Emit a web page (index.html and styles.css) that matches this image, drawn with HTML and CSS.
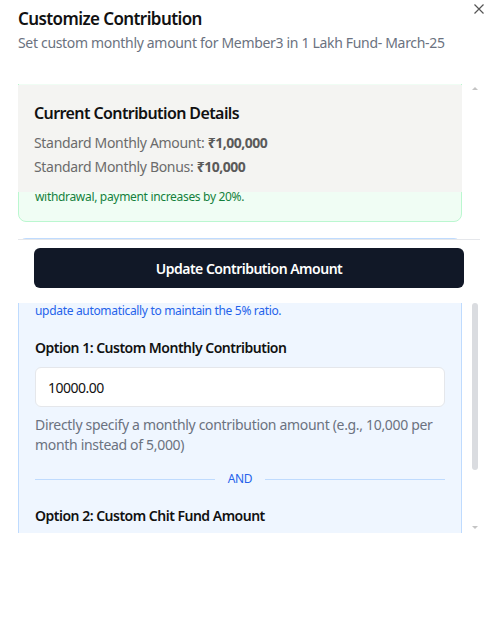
FILE: index.html
```html
<!DOCTYPE html>
<html lang="en">
<head>
<meta charset="utf-8">
<title>Customize Contribution</title>
<link rel="stylesheet" href="styles.css">
</head>
<body>
<div class="modal">
  <button class="close" aria-label="Close">
    <svg width="10" height="10" viewBox="0 0 10 10"><path d="M0.5 0.5L9.5 9.5M9.5 0.5L0.5 9.5" stroke="#555" stroke-width="1.2" fill="none"/></svg>
  </button>
  <header class="head">
    <h2 class="title">Customize Contribution</h2>
    <p class="subtitle">Set custom monthly amount for Member3 in 1 Lakh Fund- March-25</p>
  </header>

  <div class="scroll">
    <div class="scroll-content">
      <div class="note">
        <h4 class="note-title">Payment Rules</h4>
        <p class="note-text">Before withdrawal, member pays the standard amount.<br>Bonus is 10% of the standard monthly amount.<br>Custom amounts apply from this month onward.<br>Changes can be reverted at any time.<br>Standard payment applies before withdrawal. After<br>withdrawal, payment increases by 20%.</p>
      </div>

      <div class="options">
        <h4 class="options-title">Contribution Options</h4>
        <p class="options-text">Choose one option below. The other value will<br>update automatically to maintain the 5% ratio.</p>

        <div class="field">
          <label class="field-label">Option 1: Custom Monthly Contribution</label>
          <div class="input">10000.00</div>
          <p class="help">Directly specify a monthly contribution amount (e.g., 10,000 per month instead of 5,000)</p>
        </div>

        <div class="divider"><span class="rule"></span><span class="and">AND</span><span class="rule"></span></div>

        <div class="field">
          <label class="field-label">Option 2: Custom Chit Fund Amount</label>
        </div>
      </div>
    </div>

    <div class="details">
      <h3 class="details-title">Current Contribution Details</h3>
      <p class="details-line">Standard Monthly Amount: <b>₹1,00,000</b></p>
      <p class="details-line">Standard Monthly Bonus: <b>₹10,000</b></p>
    </div>

    <div class="scrollbar">
      <span class="arrow up"></span>
      <span class="thumb"></span>
      <span class="arrow down"></span>
    </div>

    <div class="footer">
      <button class="primary">Update Contribution Amount</button>
    </div>
  </div>
</div>
</body>
</html>
```

FILE: styles.css
```css
* { box-sizing: border-box; }
html, body { margin: 0; padding: 0; background: #fff; }
body {
  font-family: "Noto Sans", "Open Sans", sans-serif;
  color: #111827;
  width: 500px;
  height: 632px;
  overflow: hidden;
  letter-spacing: -0.02em;
}
.modal {
  position: relative;
  padding: 0 18px;
}
.close {
  position: absolute;
  top: 4px;
  right: 16px;
  border: 0;
  background: none;
  padding: 0;
  width: 10px;
  height: 10px;
  display: flex;
}
.head { padding-top: 5px; }
.title {
  margin: 0;
  font-size: 17px;
  line-height: 28px;
  font-weight: 600;
  letter-spacing: -0.6px;
  color: #111;
}
.subtitle {
  margin: 0;
  font-size: 14px;
  line-height: 20px;
  color: #6b7280;
}

.scroll {
  position: relative;
  margin-top: 31px;
  width: 464px;
  height: 449px;
  overflow: hidden;
}
.scroll-content {
  width: 444px;
  margin-top: -16px;
  display: flex;
  flex-direction: column;
  gap: 16px;
}
.note {
  background: #f0fdf4;
  border: 1px solid #bbf7d0;
  border-radius: 8px;
  padding: 16px;
}
.note-title {
  margin: 0 0 4px;
  font-size: 14px;
  line-height: 20px;
  font-weight: 600;
  color: #166534;
}
.note-text {
  margin: 0;
  font-size: 12px;
  line-height: 16px;
  color: #15803d;
}

.options {
  background: #eff6ff;
  border: 1px solid #bfdbfe;
  border-radius: 8px;
  padding: 16px;
  min-height: 360px;
}
.options-title {
  margin: 0 0 12px;
  font-size: 14px;
  line-height: 20px;
  font-weight: 600;
  color: #1e40af;
}
.options-text {
  margin: 0;
  font-size: 12px;
  line-height: 16px;
  color: #2563eb;
}
.field { margin-top: 19px; }
.field-label {
  display: block;
  font-size: 14px;
  line-height: 20px;
  font-weight: 600;
  letter-spacing: -0.5px;
  color: #111;
}
.input {
  margin-top: 9px;
  height: 40px;
  background: #fff;
  border: 1px solid #e5e7eb;
  border-radius: 6px;
  padding: 0 12px;
  display: flex;
  align-items: center;
  font-size: 14px;
  letter-spacing: -0.5px;
  color: #111;
}
.help {
  margin: 8px 0 0;
  font-size: 14px;
  line-height: 20px;
  color: #6b7280;
}
.divider {
  margin-top: 16px;
  display: flex;
  align-items: center;
  gap: 12px;
}
.rule { flex: 1; height: 1px; background: #bfdbfe; }
.and {
  font-size: 12px;
  line-height: 16px;
  color: #2563eb;
  padding: 0 1px;
}

.details {
  position: absolute;
  top: 1px;
  left: 0;
  width: 444px;
  background: #f4f4f2;
  padding: 16px 16px 15px;
}
.details-title {
  margin: 0;
  font-size: 16px;
  line-height: 24px;
  font-weight: 600;
  letter-spacing: -0.6px;
  color: #111;
}
.details-line {
  margin: 8px 0 0;
  font-size: 14px;
  line-height: 20px;
  color: #6b6b6b;
}
.details-line + .details-line { margin-top: 4px; }
.details-line b { font-weight: 700; color: #5a5a5a; letter-spacing: -0.5px; }

.scrollbar {
  position: absolute;
  top: 0;
  right: 0;
  width: 12px;
  height: 100%;
}
.thumb {
  position: absolute;
  top: 219px;
  left: 2px;
  width: 6px;
  height: 167px;
  border-radius: 3px;
  background: #dadce0;
}
.arrow {
  position: absolute;
  left: 2px;
  width: 0;
  height: 0;
  border-left: 3px solid transparent;
  border-right: 3px solid transparent;
}
.arrow.up { top: 3px; border-bottom: 3px solid #c4c4c4; }
.arrow.down { bottom: 4px; border-top: 3px solid #c4c4c4; }

.footer {
  position: absolute;
  top: 155px;
  left: 0;
  width: 462px;
  background: #fff;
  border-top: 1px solid #e5e7eb;
  padding: 8px 16px 15px;
}
.primary {
  display: block;
  width: 100%;
  height: 40px;
  border: 0;
  border-radius: 6px;
  background: #111827;
  color: #fff;
  font-family: inherit;
  font-size: 14px;
  font-weight: 600;
  letter-spacing: -0.5px;
}
```
